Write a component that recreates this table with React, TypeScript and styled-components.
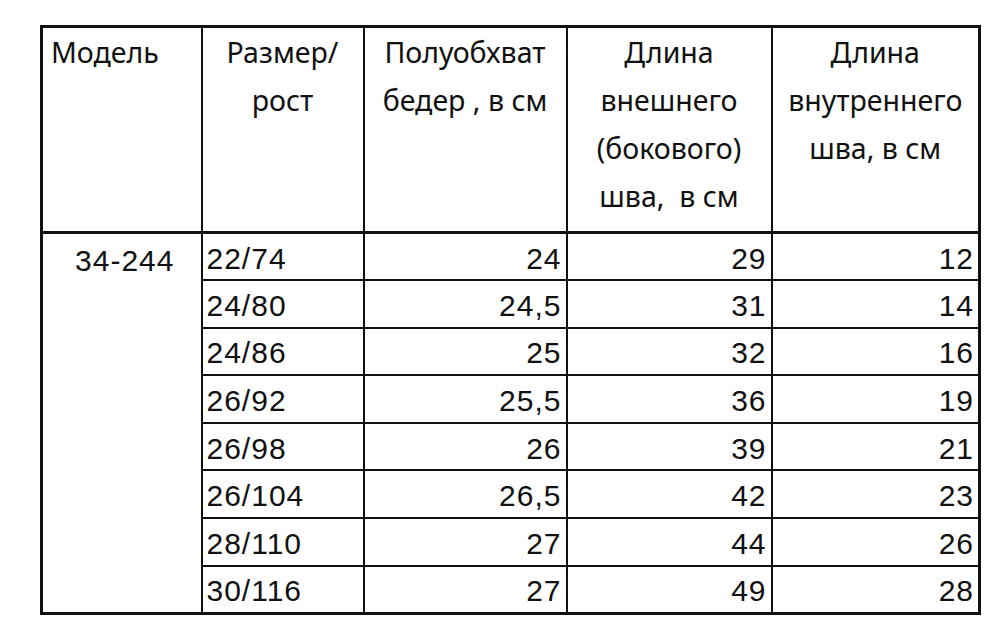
import React from "react"
import styled, { createGlobalStyle } from "styled-components"

const GlobalStyle = createGlobalStyle`
    html, body {
        margin: 0;
        padding: 0;
        background: #fff;
    }
`

//#region Css
const Page = styled.div`
    padding: 25px 0 0 40px;
`

const Table = styled.table`
    border-collapse: collapse;
    table-layout: fixed;
    width: 938px;
    border: 3px solid #111;
    color: #111;
`

const HeadCell = styled.th<{ $left?: boolean }>`
    height: 206px;
    box-sizing: border-box;
    padding: 0 2px 0 ${p => (p.$left ? "8px" : "2px")};
    vertical-align: top;
    text-align: ${p => (p.$left ? "left" : "center")};
    font-family: "Noto Sans", sans-serif;
    font-weight: 400;
    font-size: 28.5px;
    line-height: 48px;
    white-space: nowrap;
    border: 2px solid #111;
    border-bottom-width: 3px;
`

const Row = styled.tr`
    height: 47.6px;
`

const Cell = styled.td<{ $align?: "left" | "right" | "center" }>`
    padding: 4px 4px 0;
    text-align: ${p => p.$align || "right"};
    vertical-align: middle;
    font-family: "Liberation Sans", Arial, sans-serif;
    font-size: 30px;
    letter-spacing: 1px;
    line-height: 1;
    border: 2px solid #111;
`

const ModelCell = styled.td`
    vertical-align: top;
    text-align: center;
    padding: 12px 0 0 6px;
    font-family: "Liberation Sans", Arial, sans-serif;
    font-size: 30px;
    letter-spacing: 1px;
    line-height: 1;
    border: 2px solid #111;
    border-bottom-width: 3px;
`
//#endregion

const rows = [
    ["22/74", "24", "29", "12"],
    ["24/80", "24,5", "31", "14"],
    ["24/86", "25", "32", "16"],
    ["26/92", "25,5", "36", "19"],
    ["26/98", "26", "39", "21"],
    ["26/104", "26,5", "42", "23"],
    ["28/110", "27", "44", "26"],
    ["30/116", "27", "49", "28"],
]

const App = () => {
    return (
        <Page>
            <GlobalStyle />
            <Table>
                <colgroup>
                    <col style={{ width: 160 }} />
                    <col style={{ width: 162 }} />
                    <col style={{ width: 203 }} />
                    <col style={{ width: 205 }} />
                    <col style={{ width: 208 }} />
                </colgroup>
                <thead>
                    <tr>
                        <HeadCell $left>Модель</HeadCell>
                        <HeadCell>Размер/<br />рост</HeadCell>
                        <HeadCell>Полуобхват<br />бедер , в см</HeadCell>
                        <HeadCell>Длина<br />внешнего<br />(бокового)<br />шва,&nbsp; в см</HeadCell>
                        <HeadCell>Длина<br />внутреннего<br />шва, в см</HeadCell>
                    </tr>
                </thead>
                <tbody>
                    {rows.map((r, i) => (
                        <Row key={r[0]}>
                            {i === 0 && <ModelCell rowSpan={rows.length}>34-244</ModelCell>}
                            <Cell $align="left">{r[0]}</Cell>
                            <Cell>{r[1]}</Cell>
                            <Cell>{r[2]}</Cell>
                            <Cell>{r[3]}</Cell>
                        </Row>
                    ))}
                </tbody>
            </Table>
        </Page>
    )
}

export default App
